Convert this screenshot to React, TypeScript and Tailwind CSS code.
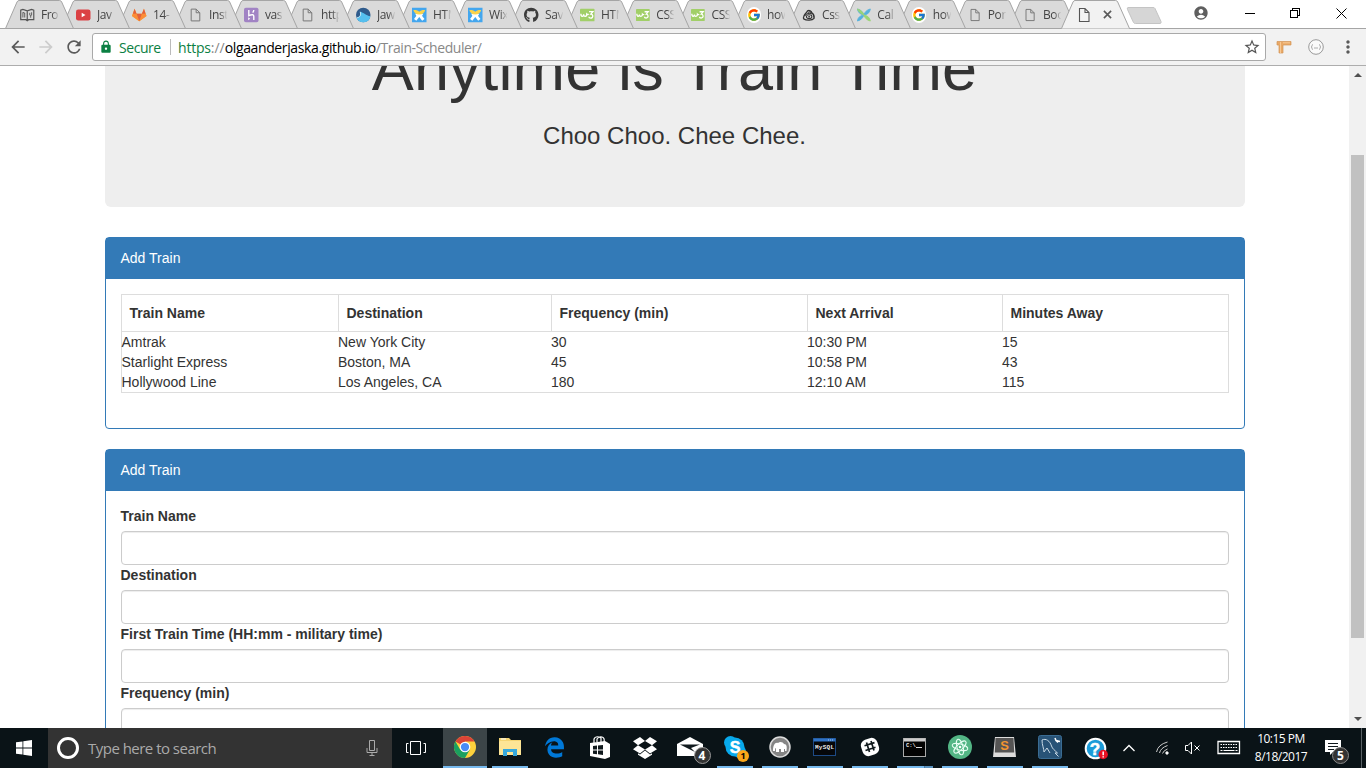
import React from "react";
import { FcGoogle } from "react-icons/fc";
import { FaGithub, FaEdgeLegacy } from "react-icons/fa";
import { MdAccountCircle, MdArrowBack, MdArrowForward, MdRefresh, MdLock, MdStarBorder, MdMoreVert } from "react-icons/md";

type IconProps = { className?: string };

const PageIcon = ({ className = "text-[#777]" }: IconProps) => (
  <svg viewBox="0 0 16 16" className={`size-4 ${className}`} fill="none" stroke="currentColor" strokeWidth="1.1">
    <path d="M3.500 1.500h5.500l4 4v9H3.500zM9 1.500v4h4" />
  </svg>
);

const BookIcon = () => (
  <svg viewBox="0 0 16 16" className="size-4" fill="none" stroke="#555" strokeWidth="1.3">
    <path d="M.8 2.600l2.400-.7L8 3.400l4.800-1.500 2.400.7v10.600H9.500L8 14.400l-1.500-1.200H.8zM8 3.400v10" />
    <path d="M3.200 5.200l2 .6v5M3.200 5v5.800M12.800 5v3l-1 1-1-1V5.600M11.800 9v2" strokeWidth="1" />
  </svg>
);

const YoutubeIcon = () => (
  <svg viewBox="0 0 16 16" className="size-4">
    <rect y="2" width="16" height="12" rx="2.500" fill="#db4144" />
    <path d="M6.300 5.500v5l4.200-2.500z" fill="#fff" />
  </svg>
);

const GitlabIcon = () => (
  <svg viewBox="0 0 16 16" className="size-4">
    <path d="M0 9.200L2.800 1l2.300 5.500h5.800L13.200 1 16 9.200 8 15z" fill="#fca326" />
    <path d="M0 9.200L1 6.500h4.100L8 15z" fill="#fc8d38" />
    <path d="M16 9.200l-1-2.700h-4.100L8 15z" fill="#fc8d38" />
    <path d="M5.100 6.500h5.800L8 15zM2.800 1l2.300 5.500H1zM13.200 1L15 6.500h-4.100z" fill="#e2603f" />
  </svg>
);

const HerokuIcon = () => (
  <svg viewBox="0 0 16 16" className="size-4">
    <rect width="16" height="16" rx="2" fill="#a183c4" />
    <path d="M5.300 2.500v6.200c4-1.800 5.500-1 5.500.6v4.200M10.800 2.500c0 1.200-.5 2-1.200 3" fill="none" stroke="#fff" strokeWidth="1.500" />
    <path d="M4.600 10.500L6.800 12l-2.200 1.700z" fill="#fff" />
  </svg>
);

const MarlinIcon = () => (
  <svg viewBox="0 0 16 16" className="size-4">
    <circle cx="8" cy="8" r="8" fill="#2f5b8c" />
    <path d="M.6 11C4 10.500 5.500 8.500 4.300 4.300c4.500.7 6.500 4.200 11.600 5A8 8 0 0 1 .6 11z" fill="#55bfee" />
    <path d="M.8 11.200C4.500 10.500 6 8 4.600 4.500" fill="none" stroke="#d5edf8" />
  </svg>
);

const WixIcon = () => (
  <svg viewBox="0 0 16 16" className="size-4">
    <rect width="16" height="16" fill="#43a6ee" />
    <path d="M3.500 13.500L8 7.500l4.500 6" fill="none" stroke="#fff" strokeWidth="3.200" />
    <path d="M3.500 6.500h9L10.500 10h-5z" fill="#fff" />
    <path d="M1.500 2.500c2.500-.5 4.800.3 6.500 1.800 1.700-1.500 4-2.300 6.500-1.800-.5 2.800-3 5-6.500 5S2 5.300 1.500 2.500z" fill="#fbd34b" />
  </svg>
);

const W3Icon = () => (
  <svg viewBox="0 0 16 16" className="size-4">
    <rect y="1" width="16" height="14" rx="1" fill="#a1cf68" />
    <path d="M1 6.500c0 4 3 3.600 3 .8 0 3 3.500 3 3.500-.3 0 0 1 1 2 0M10 4.200h4.200L12 7c2.500 0 3 4.500-.2 4.500-1.500 0-2-.8-2-1.500" fill="none" stroke="#fff" strokeWidth="1.500" />
  </svg>
);

const GithubTab = () => <FaGithub className="size-4 text-[#3c3c3c]" />;

const GoogleTab = () => (
  <span className="flex size-4 items-center justify-center rounded-full bg-white">
    <FcGoogle className="size-[14px]" />
  </span>
);

const TricksIcon = () => (
  <svg viewBox="0 0 16 16" className="size-4" fill="none" stroke="#333">
    <path d="M2.500 8.500C4 5 6 5.500 6.500 3c2-1 4.500.2 5 2.500 2 1.500 3 4 2.500 6.500-2 2.500-9 2.700-12 .5-.8-1 .5-4 .5-4z" strokeWidth="1.500" />
    <path d="M3 9c2-3 6-4 9-2M7 5c1.500-1 3-.8 4 .5" strokeWidth="1.200" />
    <ellipse cx="8.300" cy="10" rx="3.200" ry="2.200" strokeWidth="1.200" />
    <circle cx="8.300" cy="10" r="1" fill="#333" stroke="none" />
  </svg>
);

const PinwheelIcon = () => (
  <svg viewBox="0 0 16 16" className="size-4">
    <path d="M8 8C3.500 7.500 1 4.500.5 1 4.500 2 7 4.500 8 8z" fill="#55b1dc" stroke="#55b1dc" />
    <path d="M8 8c1-3.500 3.500-6 7.500-7-.5 4-3 6.500-7.500 7z" fill="#55b1dc" stroke="#55b1dc" />
    <path d="M8 8c-1 3.500-3.500 6-7.500 7 .5-4 3-6.500 7.500-7z" fill="#55b1dc" stroke="#55b1dc" />
    <path d="M8 8c4.500.5 7 3.500 7.500 7-4-1-6.500-3.500-7.500-7zM.5 1C4.500 2 7 4.500 8 8 4.500 6.500 2 4.500.5 1z" fill="#9bd474" stroke="#9bd474" />
  </svg>
);

const tabs: [React.ComponentType, string][] = [
  [BookIcon, "Fro"],
  [YoutubeIcon, "Jav"],
  [GitlabIcon, "14-"],
  [PageIcon, "Inst"],
  [HerokuIcon, "vas"],
  [PageIcon, "http"],
  [MarlinIcon, "Jaw"],
  [WixIcon, "HTM"],
  [WixIcon, "Wix"],
  [GithubTab, "Sav"],
  [W3Icon, "HTM"],
  [W3Icon, "CSS"],
  [W3Icon, "CSS"],
  [GoogleTab, "how"],
  [TricksIcon, "Css"],
  [PinwheelIcon, "Cal"],
  [GoogleTab, "how"],
  [PageIcon, "Por"],
  [PageIcon, "Boo"],
];

function TabStrip() {
  return (
    <div className="flex h-[29px] bg-[linear-gradient(to_top,#a5a5a5_1px,#fff_1px)] pl-[5px]">
      {tabs.map(([Icon, title], i) => (
        <div
          key={i}
          className={`relative isolate flex shrink-0 items-center pl-[15px] ${i < 11 ? "w-[56px]" : "w-[55.250px]"}`}
          style={{ zIndex: 30 - i }}
        >
          <svg className="absolute top-0 left-0 -z-10 h-[29px] w-[70px]" viewBox="0 0 70 29">
            <path d="M.5 28.500L12 2Q12.800.5 14 .5H54.500Q56 .5 56.700 2L68.500 28.500z" fill="#dadada" stroke="#a5a5a5" />
          </svg>
          <Icon />
          <span className="ml-[6.500px] w-[20px] shrink-0 overflow-hidden text-[12px] leading-4 tracking-[-0.400px] whitespace-nowrap text-[#444] [mask-image:linear-gradient(to_right,#000_55%,transparent_92%)]">
            {title}
          </span>
        </div>
      ))}
      <div className="relative isolate z-40 -ml-[2px] flex w-[64px] shrink-0 items-center pl-[15px]">
        <svg className="absolute top-0 left-0 -z-10 h-[29px] w-[70px]" viewBox="0 0 70 29">
          <path d="M.5 28.500L12 2Q12.800.5 14 .5H54.500Q56 .5 56.700 2L68.500 28.500" fill="#f2f2f2" stroke="#a5a5a5" />
        </svg>
        <PageIcon className="text-[#555]" />
        <svg viewBox="0 0 10 10" className="ml-[10.500px] size-[9px]" stroke="#5a5a5a" strokeWidth="1.800">
          <path d="M1 1l8 8M9 1L1 9" />
        </svg>
      </div>
      <svg className="mt-[6px] ml-px h-[19px] w-[36px] shrink-0" viewBox="0 0 36 19">
        <path d="M2 1.500h25q1.500 0 2 1l6 13q.6 1.800-1 2H9.500q-1.500 0-2-1l-6-13q-.7-2 .5-2z" fill="#d6d6d6" stroke="#c4c4c4" />
      </svg>
      <MdAccountCircle className="mt-[5px] ml-[31px] size-4 shrink-0 text-[#5f5f5f]" />
      <svg className="mt-[7px] ml-9 h-[13px] w-[103px] shrink-0" viewBox="0 0 103 13" fill="none" stroke="#000" shapeRendering="crispEdges">
        <path d="M0 6.500h10" />
        <path d="M45.500 3.500h7v7h-7zM47.500 3.500v-2h7v7h-2" />
        <path d="M91.500 1.500l10 10M101.500 1.500l-10 10" shapeRendering="auto" />
      </svg>
    </div>
  );
}

function AddressBar() {
  return (
    <div className="flex h-[37px] items-center border-b border-[#adadad] bg-[#f2f2f2] pl-[8px]">
      <MdArrowBack className="size-[20px] text-[#5a5a5a]" />
      <MdArrowForward className="ml-[8px] size-[20px] text-[#ccc]" />
      <MdRefresh className="ml-[8px] size-[20px] text-[#5a5a5a]" />
      <div className="ml-[8px] flex h-[28px] w-[1174px] items-center rounded-[3px] border border-[#a9a9a9] bg-white pr-[4px] pl-[6px] text-[14px]">
        <MdLock className="size-[14px] text-[#0b8043]" />
        <span className="ml-[6px] w-[43px] tracking-[-0.450px] whitespace-nowrap text-[#0b8043]">Secure</span>
        <span className="ml-[8px] h-4 w-px bg-[#bbb]" />
        <span className="ml-[7px] flex whitespace-nowrap">
          <span className="tracking-[-0.200px] text-[#0b8043]">https</span>
          <span className="text-[#888]">://</span>
          <span className="tracking-[-0.380px] text-black">olgaanderjaska.github.io</span>
          <span className="tracking-[-0.450px] text-[#888]">/Train-Scheduler/</span>
        </span>
        <MdStarBorder className="ml-auto size-[18px] text-[#555]" />
      </div>
      <svg viewBox="0 0 16 14" className="ml-[10px] h-[14px] w-[16px]">
        <path d="M1 1.500h14V5H7v8H3V5H1z" fill="#e9a968" stroke="#d49558" strokeWidth=".7" />
        <path d="M4.500 2v11M7 2.800h7" stroke="#f8ca95" />
      </svg>
      <svg viewBox="0 0 16 16" className="ml-[16px] size-4" fill="none" stroke="#999">
        <circle cx="8" cy="8" r="7.300" fill="#fafafa" />
        <path d="M5 5.500Q4 5.500 4 6.700T3 8Q4 8 4 9.300T5 10.500M11 5.500Q12 5.500 12 6.700T13 8Q12 8 12 9.300T11 10.500M6 9h4" strokeWidth=".8" />
      </svg>
      <MdMoreVert className="ml-[14px] size-[20px] text-[#5a5a5a]" />
    </div>
  );
}

const trains = [
  ["Amtrak", "New York City", "30", "10:30 PM", "15"],
  ["Starlight Express", "Boston, MA", "45", "10:58 PM", "43"],
  ["Hollywood Line", "Los Angeles, CA", "180", "12:10 AM", "115"],
];

function Panel({ children }: { children: React.ReactNode }) {
  return (
    <section className="rounded-[4px] border border-[#337ab7] bg-white">
      <h3 className="h-[41px] bg-[#337ab7] px-[15px] pt-[10px] leading-5 text-white">Add Train</h3>
      <div className="p-[15px]">{children}</div>
    </section>
  );
}

function Page() {
  return (
    <main className="flex h-[662px] overflow-hidden bg-white font-['Liberation_Sans',Arial,sans-serif] text-[14px] leading-5 text-[#333]">
      <div className="min-w-0 flex-1 pl-[104.500px]">
        <div className="w-[1140px]">
          <header className="mb-[30px] h-[141px] overflow-hidden rounded-b-[6px] bg-[#eee] text-center">
            <h1 className="-mt-[32px] text-[63px] leading-[69px] tracking-[0.160px]">Anytime is Train Time</h1>
            <h3 className="mt-[20px] text-[24px] leading-[26px]">Choo Choo. Chee Chee.</h3>
          </header>
          <Panel>
            <table className="mb-[20px] w-[1107px] table-fixed border-collapse border border-[#ddd] text-left">
              <colgroup>
                <col className="w-[217px]" />
                <col className="w-[213px]" />
                <col className="w-[256px]" />
                <col className="w-[195px]" />
                <col className="w-[226px]" />
              </colgroup>
              <thead>
                <tr>
                  {["Train Name", "Destination", "Frequency (min)", "Next Arrival", "Minutes Away"].map((h) => (
                    <th key={h} className="border border-[#ddd] p-2 font-bold">{h}</th>
                  ))}
                </tr>
              </thead>
              <tbody>
                {trains.map((row) => (
                  <tr key={row[0]}>
                    {row.map((c) => (
                      <td key={c} className="p-0">{c}</td>
                    ))}
                  </tr>
                ))}
              </tbody>
            </table>
          </Panel>
          <div className="mt-[20px]">
            <Panel>
              {["Train Name", "Destination", "First Train Time (HH:mm - military time)", "Frequency (min)"].map((l) => (
                <label key={l} className="block font-bold">
                  {l}
                  <input className="mt-[5px] block h-[34px] w-full rounded-[4px] border border-[#ccc] bg-white px-3 shadow-[inset_0_1px_1px_rgba(0,0,0,0.075)]" />
                </label>
              ))}
            </Panel>
          </div>
        </div>
      </div>
      <div className="flex w-[17px] flex-col items-center bg-[#f1f1f1]">
        <svg viewBox="0 0 8 4" className="mt-[7px] h-[4px] w-[8px]"><path d="M0 4l4-4 4 4z" fill="#505050" /></svg>
        <div className="mt-[78px] h-[483px] w-[13px] bg-[#c1c1c1]" />
        <svg viewBox="0 0 8 4" className="mt-[79px] h-[4px] w-[8px]"><path d="M0 0l4 4 4-4z" fill="#505050" /></svg>
      </div>
    </main>
  );
}

const ChromeIcon = () => (
  <svg viewBox="0 0 24 24" className="size-[22px]">
    <circle cx="12" cy="12" r="12" fill="#fdd13c" />
    <path d="M12 12L1.600 6A12 12 0 0 1 22.400 6H12z" fill="#db4437" />
    <path d="M1.600 6A12 12 0 0 0 12 24l5.200-9L12 12 6.800 15z" fill="#1aa05f" />
    <circle cx="12" cy="12" r="5.800" fill="#fff" />
    <circle cx="12" cy="12" r="4.500" fill="#4a8bf5" />
  </svg>
);

const FolderIcon = () => (
  <svg viewBox="0 0 22 20" className="h-[20px] w-[22px]">
    <path d="M0 1h10l2 2h10v15H0z" fill="#f5d573" />
    <path d="M1 4h21v14H0V5z" fill="#fde596" />
    <path d="M2 2h5" stroke="#fff" />
    <path d="M4 19v-7h14v7h-4v-4H8v4z" fill="#36a8dd" />
  </svg>
);

const StoreIcon = () => (
  <svg viewBox="0 0 22 24" className="h-[24px] w-[22px]">
    <path d="M1 8l15-2 5 3v13l-5 2-15-3z" fill="#fff" />
    <path d="M5 8V4q1-3 5-2l2 1v4M8 7V4q2-3 5-2t2 5" fill="none" stroke="#fff" strokeWidth="1.200" />
    <path d="M4 11l4-.4v4H4zM9 10.500l5-.6v4.700H9zM4 15.500h4v3.700l-4-.5zM9 15.500h5V20l-5-.7z" fill="#10191d" />
  </svg>
);

const DropboxIcon = () => (
  <svg viewBox="0 0 24 23" className="h-[23px] w-[24px]" fill="#fff">
    <path d="M7 1l5 4-7 4.300L0 5.300zM17 1l-5 4 7 4.300 5-4zM0 13.300l5-4 7 4.200-5 4zM24 13.300l-5-4-7 4.200 5 4zM12 14.500l5 4 2-1.300v1.500L12 23l-7-4.300v-1.500l2 1.300z" />
  </svg>
);

const Badge = ({ n, className }: { n: string; className: string }) => (
  <span className={`absolute flex items-center justify-center rounded-full font-bold ${className}`}>{n}</span>
);

const MailIcon = () => (
  <>
    <svg viewBox="0 0 26 20" className="h-[20px] w-[26px]">
      <path d="M0 7L13 0l13 7v12H0z" fill="#fff" />
      <path d="M3 7.500h20l-9 3.500 4 4z" fill="#10191d" />
    </svg>
    <Badge n="4" className="top-[19px] left-[26.500px] size-[17px] border border-[#999] bg-[#333] text-[12px] text-white" />
  </>
);

const SkypeIcon = () => (
  <>
    <svg viewBox="0 0 22 22" className="size-[22px]">
      <circle cx="6.500" cy="6.500" r="6.500" fill="#08a9ec" />
      <circle cx="15.500" cy="15.500" r="6.500" fill="#08a9ec" />
      <circle cx="11" cy="11" r="9.500" fill="#08a9ec" />
      <text x="11" y="16.500" textAnchor="middle" fill="#fff" stroke="#fff" strokeWidth=".5" fontSize="16" fontFamily="Liberation Sans" fontWeight="700">S</text>
    </svg>
    <Badge n="1" className="top-[22px] left-[25px] size-[12px] bg-[#faa61a] text-[9px] text-black" />
  </>
);

const MampIcon = () => (
  <svg viewBox="0 0 22 22" className="size-[22px]">
    <circle cx="11" cy="11" r="10" fill="#858585" stroke="#ddd" strokeWidth="1.500" />
    <path d="M4 15c0-6 2-9 5-8 2-2 5-1 6 1 3 0 3 3 2.500 7h-1.500v-2h-1v3h-3v-3h-2v3H7v-4c-1 0-1 2-1 3z" fill="#fff" />
  </svg>
);

const MysqlIcon = () => (
  <svg viewBox="0 0 23 18" className="h-[18px] w-[23px]">
    <rect x=".5" y=".5" width="22" height="17" fill="#05070a" stroke="#1d4a85" />
    <path d="M.5 2h22" stroke="#2f72c4" strokeWidth="3" />
    <path d="M15 2h6" stroke="#a9c8ee" strokeDasharray="1 1" />
    <text x="2" y="10.500" fill="#eee" fontSize="6" fontFamily="Liberation Mono" fontWeight="700" textLength="19">MySQL</text>
  </svg>
);

const SlackIcon = () => (
  <svg viewBox="0 0 20 20" className="size-[20px]">
    <rect x="1.500" y="1.500" width="17" height="17" rx="6" fill="#fff" transform="rotate(-18 10 10)" />
    <path d="M6.500 5.500l3 9.500M11 4l3 9.500M4.500 8.800l10-3.200M5.500 13.500l10-3.200" stroke="#111a1d" strokeWidth="1.700" />
  </svg>
);

const CmdIcon = () => (
  <svg viewBox="0 0 23 19" className="h-[19px] w-[23px]">
    <rect x=".5" y=".5" width="22" height="18" fill="#030303" stroke="#aaa" />
    <path d="M1 2h21" stroke="#ccc" strokeWidth="3" />
    <text x="3" y="9" fill="#eee" fontSize="5.500" fontFamily="Liberation Mono" fontWeight="700">C:\</text>
    <path d="M13 9.500h6" stroke="#ddd" />
  </svg>
);

const AtomIcon = () => (
  <svg viewBox="0 0 24 24" className="size-[24px]">
    <circle cx="12" cy="12" r="12" fill="#53b685" />
    <g fill="none" stroke="#e8fff4" strokeWidth="1">
      <ellipse cx="12" cy="12" rx="3" ry="8" transform="rotate(-15 12 12)" />
      <ellipse cx="12" cy="12" rx="3" ry="8" transform="rotate(45 12 12)" />
      <ellipse cx="12" cy="12" rx="3" ry="8" transform="rotate(105 12 12)" />
    </g>
    <circle cx="12" cy="12" r="1.300" fill="#fff" />
  </svg>
);

const SublimeIcon = () => (
  <svg viewBox="0 0 23 21" className="h-[21px] w-[23px]">
    <path d="M2 0h19l2 20H0z" fill="#ddd" />
    <path d="M2.500 1h18l.7 14.500H1.800z" fill="#555" />
    <text x="11.500" y="12.500" textAnchor="middle" fill="#f39430" fontSize="13" fontFamily="Liberation Sans" fontWeight="700">S</text>
  </svg>
);

const WorkbenchIcon = () => (
  <svg viewBox="0 0 24 24" className="size-[24px]">
    <rect x=".5" y=".5" width="23" height="23" rx="2" fill="#285377" stroke="#3a6c93" />
    <path d="M6 17c0-3-2-7-2-12 4-2 8 1 9.500 6 1 3 3 4 6 7l-2.500 0 3.500 3.500M6 17l3-4 3 5" fill="none" stroke="#c8d9e5" />
    <path d="M17 3l1 2.500 4 1M18 5.500l2 2" fill="none" stroke="#fff" strokeWidth="1.500" />
  </svg>
);

const HelpIcon = () => (
  <svg viewBox="0 0 24 24" className="size-[24px]">
    <circle cx="11.500" cy="11.500" r="9.800" fill="#1b9bd8" stroke="#fff" strokeWidth="2" />
    <text x="11" y="17.500" textAnchor="middle" fill="#fff" stroke="#fff" strokeWidth=".5" fontSize="17" fontFamily="Liberation Sans" fontWeight="700">?</text>
    <circle cx="19.200" cy="17.500" r="4.700" fill="#e81123" />
    <path d="M19.200 14.500v3.700M19.200 19.200v1.300" stroke="#fff" strokeWidth="1.500" />
  </svg>
);

const EdgeIcon = () => <FaEdgeLegacy className="size-[21px] text-[#0078d7]" />;

const apps: [React.ComponentType, string][] = [
  [FolderIcon, "bg-[#76b9ed]"],
  [EdgeIcon, ""],
  [StoreIcon, ""],
  [DropboxIcon, ""],
  [MailIcon, ""],
  [SkypeIcon, "bg-[#76b9ed]"],
  [MampIcon, "bg-[#76b9ed]"],
  [MysqlIcon, "bg-[#76b9ed]"],
  [SlackIcon, "bg-[#76b9ed]"],
  [CmdIcon, "bg-[linear-gradient(to_right,#76b9ed_27px,#4a7ba5_27px,#4a7ba5_28px,#5b93c0_28px)]"],
  [AtomIcon, "bg-[#76b9ed]"],
  [SublimeIcon, "bg-[#76b9ed]"],
  [WorkbenchIcon, "bg-[#76b9ed]"],
];

function Taskbar() {
  return (
    <footer className="flex h-10 bg-[#0a1317] text-white">
      <div className="flex w-12 items-center justify-center">
        <svg viewBox="0 0 16 16" className="size-4" fill="#fff">
          <path d="M0 2.300l6.500-.9v6.100H0zM7.300 1.300L16 0v7.500H7.300zM0 8.400h6.500v6.200L0 13.700zM7.300 8.400H16V16l-8.700-1.200z" />
        </svg>
      </div>
      <div className="flex w-[344px] items-center bg-[#333] pr-[14px] pl-[9px]">
        <span className="size-[22px] rounded-full border-[3px] border-white" />
        <span className="ml-[9px] text-[15px] tracking-[-0.520px] text-[#aaa]">Type here to search</span>
        <svg viewBox="0 0 12 16" className="ml-auto h-4 w-3" fill="none" stroke="#aaa">
          <path d="M3.500.5h5v10h-5zM1 8v4.500h10V8M6 12.500v3M3.500 15.500h5" />
        </svg>
      </div>
      <div className="flex w-[51px] items-center justify-center">
        <svg viewBox="0 0 20 14" className="ml-[-3px] h-[14px] w-[20px]" fill="none" stroke="#fff">
          <path d="M4.500.5h10v13h-10zM2.500 2.500h-2v9h2M17.500 2.500h2v9h-2" />
        </svg>
      </div>
      <div className="flex w-[44px] items-center justify-center border-b-2 border-[#76b9ed] bg-[#3c4548]">
        <ChromeIcon />
      </div>
      <div className="flex">
        {apps.map(([Icon, underline], i) => (
          <div key={i} className="relative flex w-[45px] flex-col items-center">
            <span className="flex h-[38px] items-center"><Icon /></span>
            <span className={`h-[2px] w-[36px] ${underline}`} />
          </div>
        ))}
      </div>
      <div className="flex w-[45px] items-center justify-center pt-px pl-[2px]"><HelpIcon /></div>
      <svg viewBox="0 0 124 20" className="mt-[10px] ml-[6px] h-5 w-[124px] shrink-0" fill="none" stroke="#fff">
        <path d="M.5 13L6 7.500 11.500 13" strokeWidth="1.300" />
        <path d="M33.500 14q1.500-7.500 11-10M36.500 15q1-5 8-7.500M39.500 15.500q1-3 5-4.500" stroke="#ccc" />
        <circle cx="44" cy="15" r="1.200" fill="#fff" />
        <path d="M62.500 7.500h2.500l3.500-3.500v12L65 12.500h-2.500zM71.500 7.500l5 5M76.500 7.500l-5 5" />
        <path d="M95 3.500h21.500v12H95z" strokeWidth="1.300" />
        <path d="M97.500 6.500h17M97.500 9.500h17" strokeDasharray="1.500 1" />
        <path d="M97.500 12.500h2M100.500 12.500h11M112.500 12.500h2" />
      </svg>
      <div className="ml-[3px] w-[62px] pt-[2px] text-center text-[12px] leading-[18px] tracking-[-0.500px] whitespace-nowrap">
        <div>10:15 PM</div>
        <div>8/18/2017</div>
      </div>
      <div className="relative ml-[13px] w-[34px]">
        <svg viewBox="0 0 16 16" className="mt-[12px] h-[16px] w-[16px]">
          <path d="M0 0h16v12h-8l-3 3v-3H0z" fill="#fff" />
          <path d="M3 3.500h10M3 6.500h10M3 9.500h6" stroke="#10191d" />
        </svg>
        <Badge n="5" className="top-[19px] left-[7px] size-[17px] border border-[#888] bg-[#333] text-[12px] text-white" />
      </div>
      <span className="ml-auto w-[5px] shrink-0 border-l border-[#596165]" />
    </footer>
  );
}

export default function App() {
  return (
    <div className="h-[768px] w-[1366px] overflow-hidden font-['Open_Sans','Noto_Sans',sans-serif]">
      <TabStrip />
      <AddressBar />
      <Page />
      <Taskbar />
    </div>
  );
}
